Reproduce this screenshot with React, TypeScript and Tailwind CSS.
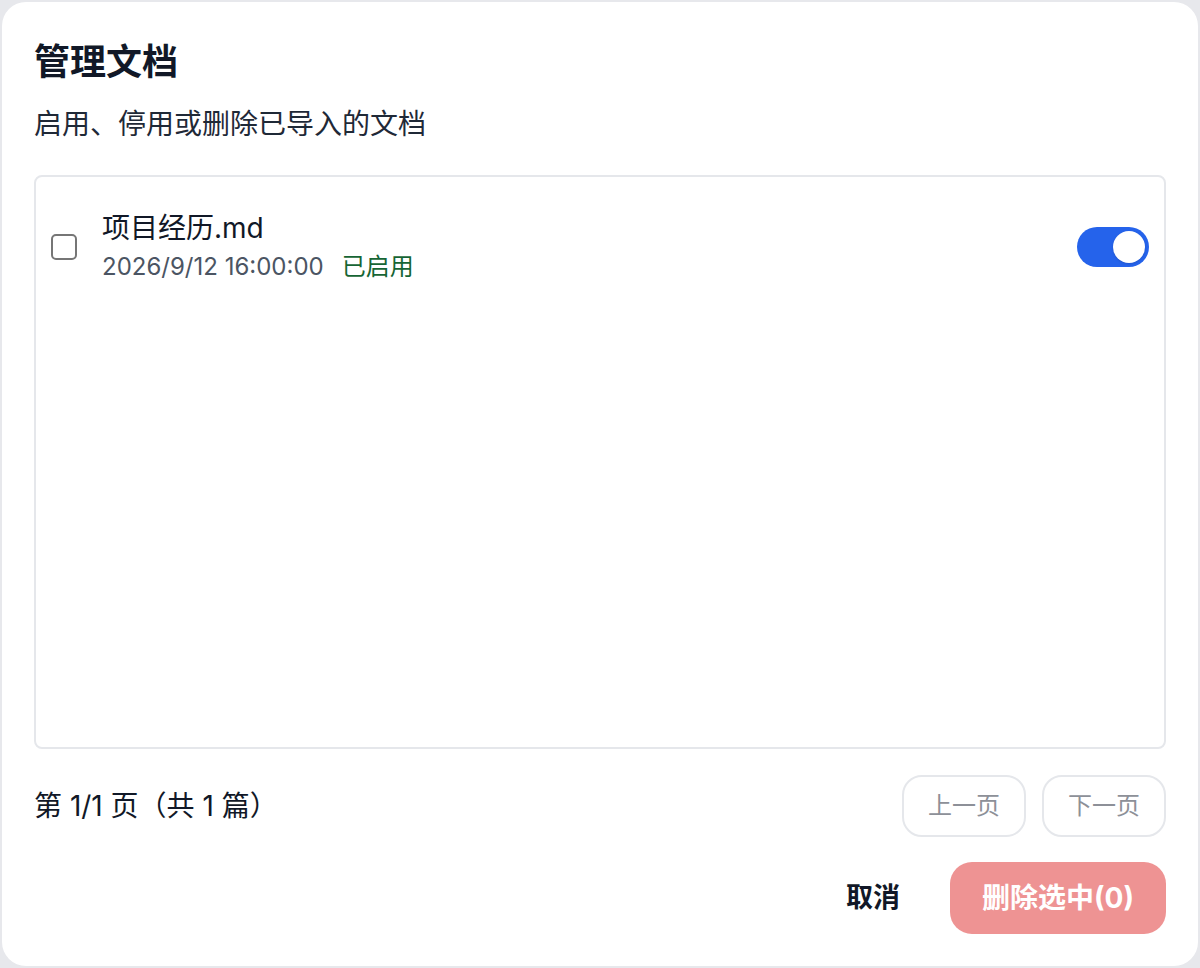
import { useState } from 'react';

const FONT = { fontFamily: 'Inter, "Noto Sans CJK SC", "Noto Sans", sans-serif' };

function Toggle({ on, onChange }: { on: boolean; onChange: (v: boolean) => void }) {
  return (
    <button
      type="button"
      onClick={() => onChange(!on)}
      className={
        'flex h-[40px] w-[72px] shrink-0 items-center rounded-full px-[4px] transition-colors ' +
        (on ? 'justify-end bg-[#2563eb]' : 'justify-start bg-[#d1d5db]')
      }
    >
      <span className="h-[32px] w-[32px] rounded-full bg-white shadow-sm" />
    </button>
  );
}

export default function App() {
  const [enabled, setEnabled] = useState(true);
  const [checked, setChecked] = useState(false);
  const selected = checked ? 1 : 0;

  return (
    <div className="h-[968px] w-full bg-[#e7e8ec] p-[2px]" style={FONT}>
      <div className="flex h-[964px] flex-col rounded-[24px] bg-white px-[32px] pb-[32px] pt-[40px]">
        <h1 className="text-[36px] font-bold leading-[40px] text-[#111827]">管理文档</h1>
        <p className="mt-[22px] text-[28px] leading-[40px] text-[#1f2937]">启用、停用或删除已导入的文档</p>

        {/* document list */}
        <div className="mt-[31px] h-[574px] rounded-[8px] border-2 border-[#e5e7eb]">
          <div className="flex items-center px-[15px] pt-[33px]">
            <button
              type="button"
              onClick={() => setChecked(!checked)}
              className={
                'h-[26px] w-[26px] shrink-0 rounded-[5px] border-2 ' +
                (checked ? 'border-[#2563eb] bg-[#2563eb]' : 'border-[#767676] bg-white')
              }
            />
            <div className="ml-[25px] flex flex-1 flex-col">
              <span className="text-[28px] leading-[36px] text-[#111827]">项目经历.md</span>
              <div className="mt-[5px] flex items-center gap-[18px] text-[24px] leading-[32px]">
                <span className="text-[#4b5563]">2026/9/12 16:00:00</span>
                <span className="text-[#166534]">{enabled ? '已启用' : '已停用'}</span>
              </div>
            </div>
            <Toggle on={enabled} onChange={setEnabled} />
          </div>
        </div>

        {/* pagination */}
        <div className="mt-[26px] flex items-center justify-between">
          <span className="text-[28px] text-[#111827]">第 1/1 页（共 1 篇）</span>
          <div className="flex gap-[16px]">
            <button className="h-[62px] w-[124px] rounded-[20px] border-2 border-[#e5e7eb] text-[24px] text-[#8d9098]">
              上一页
            </button>
            <button className="h-[62px] w-[124px] rounded-[20px] border-2 border-[#e5e7eb] text-[24px] text-[#8d9098]">
              下一页
            </button>
          </div>
        </div>

        {/* actions */}
        <div className="mt-[25px] flex items-center justify-end gap-[26px]">
          <button className="px-[24px] text-[27px] font-bold text-[#111827]">取消</button>
          <button className="h-[72px] w-[216px] rounded-[22px] bg-[#ee9393] text-[28px] font-bold text-white">
            删除选中({selected})
          </button>
        </div>
      </div>
    </div>
  );
}
